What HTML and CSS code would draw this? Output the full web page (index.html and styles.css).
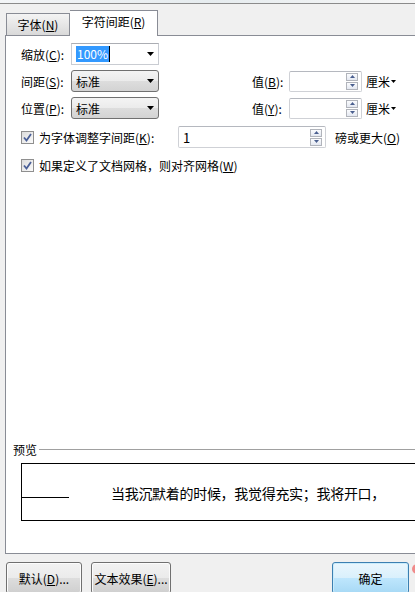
FILE: index.html
```html
<!DOCTYPE html>
<html lang="zh-CN">
<head>
<meta charset="utf-8">
<title>字体</title>
<link rel="stylesheet" href="styles.css">
</head>
<body>
<div class="topstrip"></div>
<div class="tabs">
  <div class="tab">字体(<u>N</u>)</div>
  <div class="tab active">字符间距(<u>R</u>)</div>
</div>
<div class="panel">
  <div class="form">
    <div class="row">
      <span class="label">缩放(<u>C</u>):</span>
      <div class="combo edit">
        <span class="sel">100%</span><span class="caret"></span>
        <svg class="arrow" width="7" height="4" viewBox="0 0 7 4"><polygon points="0,0 7,0 3.5,4" fill="#000"/></svg>
      </div>
    </div>
    <div class="row gap5">
      <span class="label">间距(<u>S</u>):</span>
      <div class="combo drop">
        <span class="txt">标准</span>
        <svg class="arrow" width="7" height="4" viewBox="0 0 7 4"><polygon points="0,0 7,0 3.5,4" fill="#000"/></svg>
      </div>
      <span class="label2">值(<u>B</u>):</span>
      <div class="spin small">
        <span class="val"></span>
        <div class="spinbtns">
          <span class="sb"><svg width="5" height="3" viewBox="0 0 5 3"><polygon points="0,3 5,3 2.5,0" fill="#4a5f8f"/></svg></span>
          <span class="sb"><svg width="5" height="3" viewBox="0 0 5 3"><polygon points="0,0 5,0 2.5,3" fill="#4a5f8f"/></svg></span>
        </div>
      </div>
      <span class="unit">厘米<svg width="5" height="3" viewBox="0 0 5 3"><polygon points="0,0 5,0 2.5,3" fill="#000"/></svg></span>
    </div>
    <div class="row gap5">
      <span class="label">位置(<u>P</u>):</span>
      <div class="combo drop">
        <span class="txt">标准</span>
        <svg class="arrow" width="7" height="4" viewBox="0 0 7 4"><polygon points="0,0 7,0 3.5,4" fill="#000"/></svg>
      </div>
      <span class="label2">值(<u>Y</u>):</span>
      <div class="spin small">
        <span class="val"></span>
        <div class="spinbtns">
          <span class="sb"><svg width="5" height="3" viewBox="0 0 5 3"><polygon points="0,3 5,3 2.5,0" fill="#4a5f8f"/></svg></span>
          <span class="sb"><svg width="5" height="3" viewBox="0 0 5 3"><polygon points="0,0 5,0 2.5,3" fill="#4a5f8f"/></svg></span>
        </div>
      </div>
      <span class="unit">厘米<svg width="5" height="3" viewBox="0 0 5 3"><polygon points="0,0 5,0 2.5,3" fill="#000"/></svg></span>
    </div>
    <div class="row gap7">
      <span class="check"><svg width="13" height="13" viewBox="0 0 13 13"><polyline points="3,6.5 5.5,9.5 10,3" fill="none" stroke="#4a5f97" stroke-width="1.8"/></svg></span>
      <span class="clabel">为字体调整字间距(<u>K</u>):</span>
      <div class="spin wide">
        <span class="val">1</span>
        <div class="spinbtns">
          <span class="sb"><svg width="5" height="3" viewBox="0 0 5 3"><polygon points="0,3 5,3 2.5,0" fill="#4a5f8f"/></svg></span>
          <span class="sb"><svg width="5" height="3" viewBox="0 0 5 3"><polygon points="0,0 5,0 2.5,3" fill="#4a5f8f"/></svg></span>
        </div>
      </div>
      <span class="after">磅或更大(<u>O</u>)</span>
    </div>
    <div class="row gap7 short">
      <span class="check"><svg width="13" height="13" viewBox="0 0 13 13"><polyline points="3,6.5 5.5,9.5 10,3" fill="none" stroke="#4a5f97" stroke-width="1.8"/></svg></span>
      <span class="clabel2">如果定义了文档网格，则对齐网格(<u>W</u>)</span>
    </div>
  </div>
  <div class="preview">
    <div class="phead"><span>预览</span><span class="pline"></span></div>
    <div class="pbox">
      <span class="indent"></span>
      <span class="ptext">当我沉默着的时候，我觉得充实；我将开口，</span>
    </div>
  </div>
</div>
<div class="footer">
  <button class="btn b1">默认(<u>D</u>)...</button>
  <button class="btn b2">文本效果(<u>E</u>)...</button>
  <button class="btn ok">确定</button>
  <span class="dot"></span>
</div>
</body>
</html>
```

FILE: styles.css
```css
html, body {
  margin: 0;
  padding: 0;
}
body {
  width: 415px;
  height: 592px;
  overflow: hidden;
  background: #f0f0f0;
  font-family: "Noto Sans CJK SC", "Microsoft YaHei", sans-serif;
  font-size: 12px;
  color: #000;
}
u { text-decoration: underline; text-underline-offset: 1px; }

.topstrip {
  height: 3px;
  background: linear-gradient(90deg, #f3f5f7, #e6ecef 50%, #f6f6f6);
  border-bottom: 1px solid #8b8b8b;
}

.tabs {
  height: 31px;
  display: flex;
  align-items: flex-end;
  padding-left: 6px;
  position: relative;
  z-index: 2;
}
.tab {
  box-sizing: border-box;
  height: 22px;
  width: 64px;
  flex-shrink: 0;
  border: 1px solid #898c95;
  border-bottom: none;
  background: linear-gradient(#f4f4f4, #e4e4e4 60%, #d9d9d9);
  display: flex;
  align-items: center;
  justify-content: center;
  line-height: 16px;
  padding-top: 1px;
}
.tab.active {
  height: 26px;
  width: 88px;
  margin-bottom: -1px;
  background: #fff;
  border-left: none;
  padding-top: 0;
  padding-bottom: 3px;
}

.panel {
  box-sizing: border-box;
  margin-left: 5px;
  width: 430px;
  height: 519px;
  border: 1px solid #898c95;
  border-right: none;
  background: #fff;
  display: flex;
  flex-direction: column;
  padding: 7px 0 32px 0;
  position: relative;
  z-index: 1;
}

.form {
  padding-left: 15px;
}
.row {
  display: flex;
  align-items: center;
  height: 22px;
}
.row > * { flex-shrink: 0; }
.row.gap5 { margin-top: 5px; }
.row.gap7 { margin-top: 7px; }
.row.short { height: 20px; }

.label {
  width: 50px;
  white-space: nowrap;
}
.combo {
  box-sizing: border-box;
  width: 88px;
  height: 22px;
  display: flex;
  align-items: center;
  padding: 0 4px 0 4px;
}
.combo .arrow { margin-left: auto; }
.combo.edit {
  border: 1px solid #c9ccd2;
  border-top-color: #abadb3;
  background: #fff;
}
.combo.drop {
  border: 1px solid #707070;
  border-radius: 3px;
  background: linear-gradient(#f4f4f4, #ebebeb 50%, #dddddd 51%, #d3d3d3);
}
.sel {
  background: #3399ff;
  color: #fff;
  line-height: 16px;
  padding: 0 1px;
}
.caret {
  width: 1px;
  height: 16px;
  background: #000;
}

.label2 {
  margin-left: 93px;
  width: 37px;
  white-space: nowrap;
}
.spin {
  box-sizing: border-box;
  height: 21px;
  border: 1px solid #cfd1d6;
  border-top-color: #b5b8bf;
  border-radius: 2px;
  background: #fff;
  display: flex;
  align-items: center;
  padding: 0 3px 0 4px;
}
.spin.small { width: 73px; }
.spin.wide { width: 148px; height: 22px; }
.spin .val {
  flex: 1;
  font-size: 13px;
}
.spinbtns {
  display: flex;
  flex-direction: column;
  gap: 1px;
}
.sb {
  box-sizing: border-box;
  width: 12px;
  height: 8px;
  border: 1px solid #b1b4bb;
  background: linear-gradient(#fbfcfe, #e4e8f1);
  display: flex;
  align-items: center;
  justify-content: center;
}
.unit {
  margin-left: 4px;
  display: flex;
  align-items: center;
  gap: 1px;
  white-space: nowrap;
}

.check {
  box-sizing: border-box;
  width: 13px;
  height: 13px;
  border: 1px solid #8f8f8f;
  background: linear-gradient(135deg, #dcdcdc, #fbfbfb);
  display: flex;
}
.check svg { margin: -1px; }
.clabel {
  margin-left: 5px;
  width: 139px;
  white-space: nowrap;
}
.clabel2 {
  margin-left: 5px;
  white-space: nowrap;
}
.after {
  margin-left: 9px;
  white-space: nowrap;
}

.preview {
  margin-top: auto;
  padding-left: 7px;
}
.phead {
  display: flex;
  align-items: center;
  height: 14px;
}
.pline {
  flex: 1;
  height: 1px;
  background: #a0a0a0;
  margin-left: 2px;
}
.pbox {
  box-sizing: border-box;
  margin-top: 7px;
  margin-left: 8px;
  height: 58px;
  border: 1px solid #000;
  border-right: none;
  display: flex;
  align-items: flex-start;
}
.indent {
  width: 47px;
  height: 1px;
  background: #000;
  margin-top: 33px;
  flex-shrink: 0;
}
.ptext {
  margin-left: 42px;
  margin-top: 19px;
  font-size: 14px;
  line-height: 20px;
  white-space: nowrap;
  letter-spacing: -0.3px;
}

.footer {
  display: flex;
  align-items: flex-start;
  padding-left: 6px;
  margin-top: 8px;
}
.footer > * { flex-shrink: 0; }
.btn {
  box-sizing: border-box;
  height: 32px;
  margin: 0;
  border: 1px solid #707070;
  border-radius: 3px;
  background: linear-gradient(#f2f2f2, #ebebeb 50%, #dddddd 51%, #cfcfcf);
  font-family: inherit;
  font-size: 12px;
  color: #000;
  padding: 0;
  box-shadow: inset 0 0 0 1px #fcfcfc;
}
.b1 { width: 76px; }
.b2 { width: 80px; margin-left: 9px; }
.ok {
  width: 77px;
  margin-left: 161px;
  border-color: #3c7fb1;
  background: linear-gradient(#eaf6fd, #d9f0fc 50%, #bee6fd 51%, #a7d9f5);
  box-shadow: inset 0 0 0 1px #c9ecfc;
}
.dot {
  width: 10px;
  height: 10px;
  border-radius: 50%;
  background: #f08a8a;
  margin-left: 3px;
  margin-top: 2px;
}
```
